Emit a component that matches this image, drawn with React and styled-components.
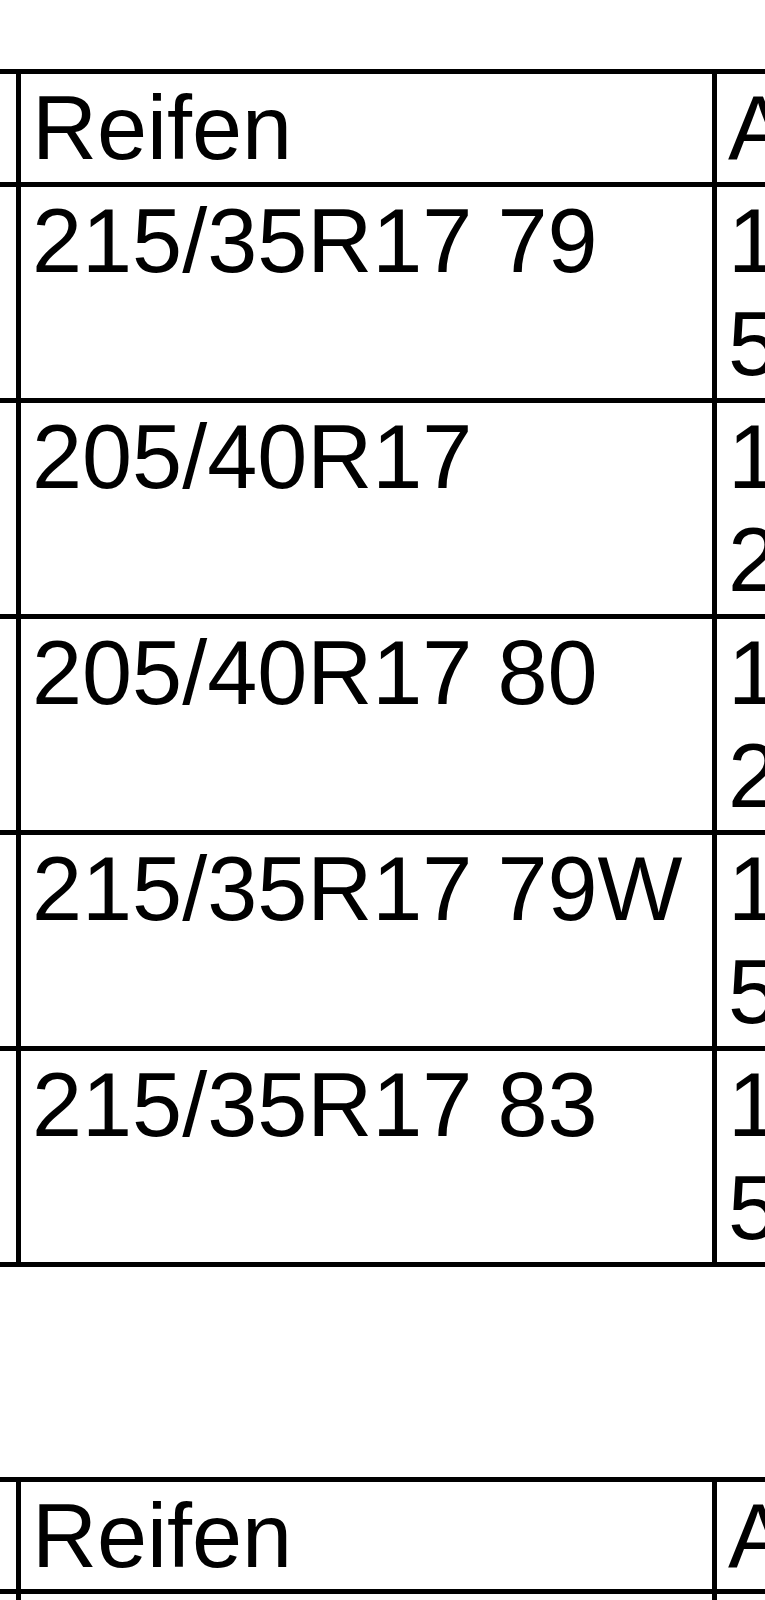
import React from "react";
import styled, { createGlobalStyle } from "styled-components";

const Global = createGlobalStyle`
  html, body {
    margin: 0;
    padding: 0;
    background: #ffffff;
    overflow: hidden;
  }
  body {
    font-family: "Liberation Sans", Arial, sans-serif;
    color: #000000;
  }
`;

const Page = styled.div`
  width: 765px;
  height: 1600px;
  overflow: hidden;
  padding-top: 69px;
  box-sizing: border-box;
  display: flex;
  flex-direction: column;
  gap: 210px;
`;

const Table = styled.div`
  display: grid;
  grid-template-columns: 21px 696px 400px;
  border-top: 5px solid #000;
  width: max-content;
`;

const Cell = styled.div`
  border-right: 5px solid #000;
  border-bottom: 5px solid #000;
  padding: 3px 0 1px 11px;
  font-size: 90px;
  line-height: 103.5px;
  white-space: nowrap;
  overflow: hidden;
  min-height: ${(p) => (p.$lines || 1) * 103.5}px;
`;

const EdgeCell = styled(Cell)`
  padding: 0;
`;

const rows = [
  { tyre: "215/35R17 79", a: "1 Satz", b: "5 Jahre" },
  { tyre: "205/40R17", a: "1 Satz", b: "2 Jahre" },
  { tyre: "205/40R17 80", a: "1 Satz", b: "2 Jahre" },
  { tyre: "215/35R17 79W", a: "1 Satz", b: "5 Jahre" },
  { tyre: "215/35R17 83", a: "1 Satz", b: "5 Jahre" },
];

function TyreTable() {
  return (
    <Table>
      <EdgeCell />
      <Cell>Reifen</Cell>
      <Cell>Anzahl</Cell>
      {rows.map((r, i) => (
        <React.Fragment key={i}>
          <EdgeCell $lines={2} />
          <Cell $lines={2}>{r.tyre}</Cell>
          <Cell $lines={2}>
            {r.a}
            <br />
            {r.b}
          </Cell>
        </React.Fragment>
      ))}
    </Table>
  );
}

export default function App() {
  return (
    <>
      <Global />
      <Page>
        <TyreTable />
        <TyreTable />
      </Page>
    </>
  );
}
